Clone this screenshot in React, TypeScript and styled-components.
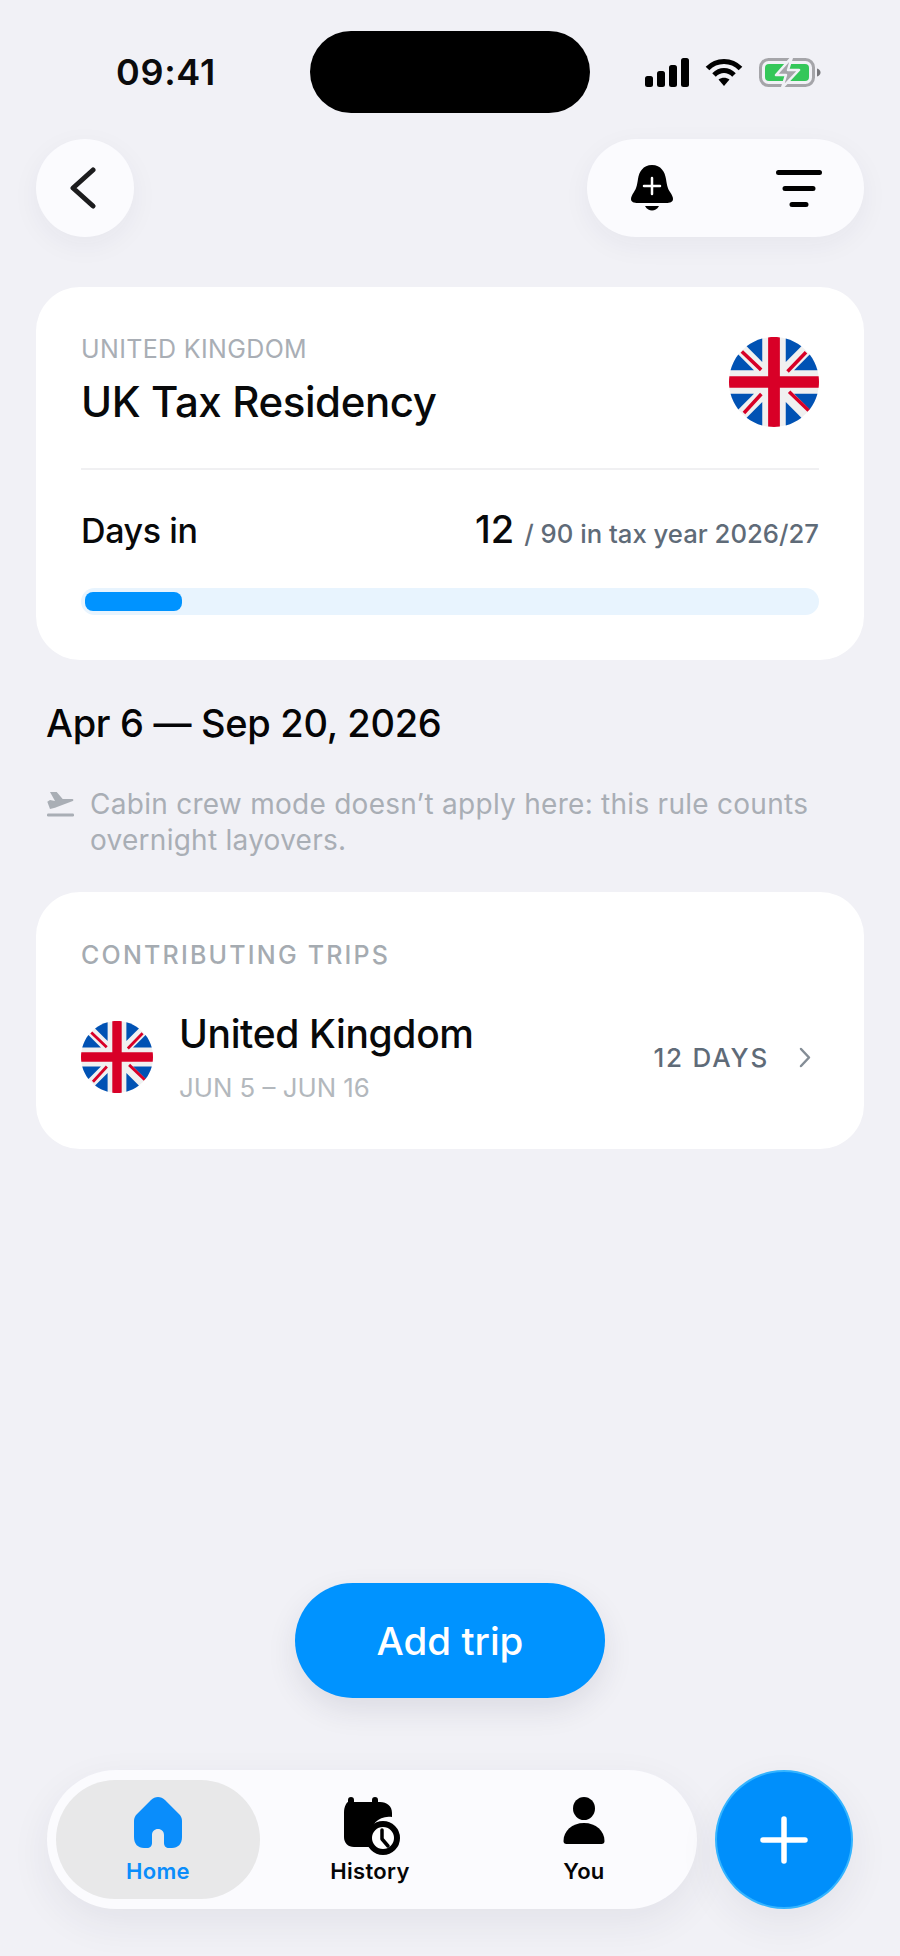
import React from "react";
import styled, { createGlobalStyle } from "styled-components";

const Global = createGlobalStyle`
  html, body { margin: 0; padding: 0; background: #f1f1f6; }
  * { box-sizing: border-box; }
  body { font-family: "Inter", "Noto Sans", sans-serif; }
`;

const Page = styled.div`
  width: 900px;
  height: 1956px;
  display: flex;
  flex-direction: column;
  background: #f1f1f6;
  overflow: hidden;
`;
const StatusBar = styled.div`
  display: grid;
  grid-template-columns: 310px 280px 310px;
  align-items: center;
  height: 82px;
  margin-top: 31px;
`;
const Clock = styled.div`
  padding-left: 116px;
  font-size: 36px;
  font-weight: 600;
  letter-spacing: 0.7px;
  color: #0b0b0c;
`;
const Island = styled.div`
  height: 82px;
  background: #000;
  border-radius: 41px;
`;
const StatusIcons = styled.div`
  display: flex;
  align-items: center;
  padding-left: 55px;
  gap: 16px;
`;
const TopBar = styled.div`
  display: flex;
  justify-content: space-between;
  margin: 26px 36px 0;
`;
const RoundButton = styled.div`
  width: 98px;
  height: 98px;
  border-radius: 50%;
  background: #fbfbfe;
  display: flex;
  align-items: center;
  justify-content: center;
  padding-right: 4px;
  box-shadow: 0 8px 28px rgba(40, 40, 70, 0.05);
`;
const PillButton = styled.div`
  width: 277px;
  height: 98px;
  border-radius: 49px;
  background: #fbfbfe;
  display: flex;
  align-items: center;
  justify-content: space-between;
  padding: 0 42px 0 43px;
  box-shadow: 0 8px 28px rgba(40, 40, 70, 0.05);
`;
const Card = styled.section`
  margin: 0 36px;
  background: #fff;
  border-radius: 44px;
  padding: 0 45px;
`;
const SummaryCard = styled(Card)`
  margin-top: 50px;
  height: 373px;
  padding-top: 50px;
`;
const SummaryHead = styled.div`
  display: flex;
  justify-content: space-between;
  height: 133px;
  border-bottom: 2px solid #f0f0f2;
`;
const Eyebrow = styled.div`
  font-size: 25px;
  line-height: 24px;
  letter-spacing: 0.35px;
  color: #a9aeb5;
`;
const Title = styled.h1`
  margin: 15px 0 0;
  font-size: 42px;
  line-height: 52px;
  font-weight: 500;
  letter-spacing: -0.4px;
  color: #08090a;
`;
const DaysRow = styled.div`
  display: flex;
  justify-content: space-between;
  align-items: baseline;
  margin-top: 36px;
`;
const DaysLabel = styled.span`
  font-size: 34px;
  line-height: 44px;
  font-weight: 500;
  letter-spacing: -0.4px;
  color: #08090a;
`;
const DaysValue = styled.span`
  font-size: 38px;
  font-weight: 500;
  color: #08090a;
`;
const DaysOf = styled.span`
  font-size: 25.7px;
  font-weight: 500;
  color: #5f6b78;
  margin-left: 10px;
`;
const Track = styled.div`
  margin-top: 35px;
  height: 27px;
  border-radius: 14px;
  background: #e8f4fe;
  padding: 4px;
`;
const Fill = styled.div`
  height: 19px;
  border-radius: 8px;
  background: #0093ff;
`;
const DateHeading = styled.h2`
  margin: 39px 0 0 46px;
  font-size: 38px;
  line-height: 48px;
  font-weight: 500;
  letter-spacing: -0.3px;
  color: #050506;
`;
const Note = styled.div`
  display: flex;
  gap: 16px;
  margin: 39px 46px 0 46px;
`;
const NoteIcon = styled.div`
  flex: none;
  width: 28px;
  padding-top: 6px;
`;
const NoteText = styled.p`
  margin: 0;
  font-size: 28px;
  line-height: 36px;
  letter-spacing: 0.27px;
  color: #a9aeb5;
`;
const TripsCard = styled(Card)`
  margin-top: 34px;
  height: 257px;
  padding-top: 48px;
`;
const SectionLabel = styled.div`
  font-size: 25px;
  line-height: 30px;
  font-weight: 500;
  letter-spacing: 2.2px;
  color: #a5abb1;
`;
const TripRow = styled.div`
  display: flex;
  align-items: center;
  margin-top: 40px;
`;
const TripText = styled.div`
  margin-left: 26px;
  flex: 1;
`;
const TripName = styled.div`
  font-size: 39px;
  line-height: 48px;
  font-weight: 500;
  letter-spacing: -0.35px;
  color: #08090a;
`;
const TripDates = styled.div`
  margin-top: 14px;
  font-size: 25.8px;
  line-height: 32px;
  color: #b3b8bd;
`;
const TripDays = styled.div`
  font-size: 26px;
  font-weight: 500;
  letter-spacing: 1.8px;
  color: #5f6b78;
  margin-right: 30px;
`;
const ChevronSlot = styled.div`
  display: flex;
  margin-right: 8px;
`;
const Spacer = styled.div`
  flex: 1;
`;
const AddTrip = styled.button`
  align-self: center;
  width: 310px;
  height: 115px;
  border: 0;
  border-radius: 58px;
  background: #0093ff;
  color: #fff;
  font-family: inherit;
  font-size: 38.5px;
  font-weight: 500;
  box-shadow: 0 12px 30px rgba(40, 40, 70, 0.1);
`;
const BottomRow = styled.div`
  display: flex;
  gap: 18px;
  margin: 72px 47px 47px 47px;
`;
const Nav = styled.nav`
  width: 650px;
  height: 139px;
  border-radius: 70px;
  background: #fbfbfe;
  padding: 10px 9px;
  display: grid;
  grid-template-columns: 204px 220px 208px;
  box-shadow: 0 14px 40px rgba(40, 40, 70, 0.07);
`;
const NavItem = styled.div<{ $active?: boolean }>`
  height: 119px;
  border-radius: 60px;
  background: ${(p) => (p.$active ? "#e8e8e9" : "transparent")};
  color: ${(p) => (p.$active ? "#0a8dfb" : "#050506")};
  display: flex;
  flex-direction: column;
  align-items: center;
  font-size: 22px;
  font-weight: 600;
  letter-spacing: 0.3px;
  line-height: 28px;
`;
const NavIcon = styled.div`
  height: 77px;
  padding-top: 17px;
  display: flex;
  justify-content: center;
`;
const Fab = styled.div`
  width: 138px;
  height: 139px;
  border-radius: 50%;
  background: #008ffb;
  border: 2px solid #33b4ff;
  display: flex;
  align-items: center;
  justify-content: center;
  box-shadow: 0 14px 40px rgba(40, 40, 70, 0.07);
`;

const Flag = ({ size }: { size: number }) => (
  <svg width={size} height={size} viewBox="0 0 512 512" style={{ flex: "none" }}>
    <circle cx="256" cy="256" r="256" fill="#f0f0f0" />
    <g fill="#0052b4">
      <path d="M52.92 100.142c-20.109 26.163-35.272 56.318-44.101 89.077h133.178L52.92 100.142z" />
      <path d="M503.181 189.219c-8.829-32.758-23.993-62.913-44.101-89.076l-89.075 89.076h133.176z" />
      <path d="M8.819 322.784c8.83 32.758 23.993 62.913 44.101 89.075l89.074-89.075H8.819z" />
      <path d="M411.858 52.921c-26.163-20.109-56.317-35.272-89.076-44.102v133.177l89.076-89.075z" />
      <path d="M100.142 459.079c26.163 20.109 56.318 35.272 89.076 44.102V370.005l-89.076 89.074z" />
      <path d="M189.217 8.819c-32.758 8.83-62.913 23.993-89.075 44.101l89.075 89.075V8.819z" />
      <path d="M322.783 503.181c32.758-8.83 62.913-23.993 89.075-44.101l-89.075-89.075v133.176z" />
      <path d="M370.005 322.784l89.075 89.076c20.108-26.162 35.272-56.318 44.101-89.076H370.005z" />
    </g>
    <path
      fill="#d80027"
      d="M509.833 222.609H289.392V2.167C278.461.744 267.317 0 256 0c-11.319 0-22.461.744-33.391 2.167v220.441H2.167C.744 233.539 0 244.683 0 256c0 11.319.744 22.461 2.167 33.391h220.441v220.442C233.539 511.256 244.681 512 256 512c11.317 0 22.461-.744 33.391-2.167V289.392h220.442C511.256 278.461 512 267.317 512 256c0-11.317-.744-22.461-2.167-33.391z"
    />
    <path
      d="M73 82L183 187M438 87L333 196M85 432L184 324M453 418L342 312"
      stroke="#d80027"
      strokeWidth="20"
      fill="none"
    />
  </svg>
);

const Signal = () => (
  <svg width="44" height="29" viewBox="0 0 44 29" fill="#000">
    <rect x="0" y="18" width="8" height="11" rx="2.5" />
    <rect x="12" y="13" width="8" height="16" rx="2.5" />
    <rect x="24" y="7" width="8" height="22" rx="2.5" />
    <rect x="36" y="0" width="8" height="29" rx="2.5" />
  </svg>
);
const Wifi = () => (
  <svg width="38" height="29" viewBox="0 0 38 29" fill="none" stroke="#000" strokeWidth="5">
    <path d="M2.5 10.5C11.5 1 26.5 1 35.5 10.5" />
    <path d="M9 17C15 11 23 11 29 17" />
    <path d="M13.5 21.5L19 28L24.5 21.5C21 19 17 19 13.5 21.5Z" fill="#000" stroke="none" />
  </svg>
);
const Battery = () => (
  <svg width="62" height="29" viewBox="0 0 62 29">
    <rect x="1.5" y="1.5" width="53" height="26" rx="8" fill="none" stroke="#a5a5a9" strokeWidth="3" />
    <rect x="6" y="6" width="44" height="17" rx="4" fill="#34c759" />
    <path d="M58 10.5c2 .6 3.5 2 3.5 4s-1.500 3.400-3.500 4z" fill="#77777b" />
    <path d="M33 -1L17 17H27L23 30L40 12H29Z" fill="#a5a5a9" stroke="#f1f1f6" strokeWidth="2.500" strokeLinejoin="round" />
  </svg>
);
const Chevron = () => (
  <svg width="26" height="42" viewBox="0 0 26 42" fill="none" stroke="#1c1c1e" strokeWidth="5" strokeLinecap="round" strokeLinejoin="round">
    <path d="M23 3L3 21L23 39" />
  </svg>
);
const BellPlus = () => (
  <svg width="44" height="46" viewBox="0 0 44 46">
    <path
      d="M22 0C31 0 35 7 36 14C37 21 38 24 40 27C42 30 43 32 43 34C43 37 40 38 36 38H8C4 38 1 37 1 34C1 32 2 30 4 27C6 24 7 21 8 14C9 7 13 0 22 0Z"
      fill="#000"
    />
    <path d="M15 41H29C27 44.500 24.500 45.500 22 45.500C19.500 45.500 17 44.500 15 41Z" fill="#000" />
    <path d="M22 13V29M14 21H30" stroke="#fff" strokeWidth="2.500" strokeLinecap="round" />
  </svg>
);
const FilterLines = () => (
  <svg width="46" height="37" viewBox="0 0 46 37" stroke="#000" strokeWidth="5" strokeLinecap="round">
    <path d="M2.500 2.500H43.500M9 18.500H37M16 34.500H30" />
  </svg>
);
const SmallChevron = () => (
  <svg width="12" height="21" viewBox="0 0 12 21" fill="none" stroke="#848d96" strokeWidth="2.500" strokeLinecap="round" strokeLinejoin="round">
    <path d="M2 2L10 10.500L2 19" />
  </svg>
);
const Landing = () => (
  <svg width="28" height="26" viewBox="0 0 28 26" fill="#a9aeb5">
    <path d="M4 0H10.700L16.700 7H26.300C27.500 7 27.800 8.500 26.800 9L9 15.700L4 17L1.300 9.700L4 8L9 9Z" />
    <rect x="1" y="21.500" width="27" height="3" rx="1.200" />
  </svg>
);
const Home = () => (
  <svg width="48" height="51" viewBox="0 0 48 51" fill="#0a8dfb">
    <path d="M17 3C21 -1 27 -1 31 3L45 17C47 19 48 21 48 24V40C48 47 44 51 38 51H35C32 51 30 49 30 46V38C30 34.500 27.500 32 24 32C20.500 32 18 34.500 18 38V46C18 49 16 51 13 51H10C4 51 0 47 0 40V24C0 21 1 19 3 17Z" />
  </svg>
);
const History = () => (
  <svg width="56" height="58" viewBox="0 0 56 58" style={{ marginLeft: 3 }}>
    <path d="M7 0C9 0 10 1.200 10 3V5H28V3C28 1.200 29 0 31 0C33 0 34 1.200 34 3V5H36C43 5 48 9 48 16V20C36 18 26 27 26 39C26 43 27 47 29 50H10C4 50 0 46 0 40V16C0 9 3 5 4 5V3C4 1.200 5 0 7 0Z" fill="#000" />
    <circle cx="39" cy="41" r="14" fill="#fff" stroke="#000" strokeWidth="6" />
    <path d="M38 33V42L44 49" stroke="#000" strokeWidth="3.500" fill="none" strokeLinecap="round" strokeLinejoin="round" />
  </svg>
);
const Person = () => (
  <svg width="42" height="48" viewBox="0 0 42 48" fill="#000">
    <ellipse cx="21" cy="11.500" rx="11" ry="11.500" />
    <path d="M21 26C9 26 0.500 34 0.500 44C0.500 46 1.500 47 3.500 47H38.500C40.500 47 41.500 46 41.500 44C41.500 34 33 26 21 26Z" />
  </svg>
);
const Plus = () => (
  <svg width="48" height="48" viewBox="0 0 48 48" stroke="#fff" strokeWidth="5.500" strokeLinecap="round">
    <path d="M24 3V45M3 24H45" />
  </svg>
);

export default function App() {
  return (
    <Page>
      <Global />
      <StatusBar>
        <Clock>09:41</Clock>
        <Island />
        <StatusIcons>
          <Signal />
          <Wifi />
          <Battery />
        </StatusIcons>
      </StatusBar>
      <TopBar>
        <RoundButton>
          <Chevron />
        </RoundButton>
        <PillButton>
          <BellPlus />
          <FilterLines />
        </PillButton>
      </TopBar>
      <SummaryCard>
        <SummaryHead>
          <div>
            <Eyebrow>UNITED KINGDOM</Eyebrow>
            <Title>UK Tax Residency</Title>
          </div>
          <Flag size={90} />
        </SummaryHead>
        <DaysRow>
          <DaysLabel>Days in</DaysLabel>
          <span>
            <DaysValue>12</DaysValue>
            <DaysOf>/ 90 in tax year 2026/27</DaysOf>
          </span>
        </DaysRow>
        <Track>
          <Fill style={{ width: `${(12 / 90) * 100}%` }} />
        </Track>
      </SummaryCard>
      <DateHeading>Apr 6 — Sep 20, 2026</DateHeading>
      <Note>
        <NoteIcon>
          <Landing />
        </NoteIcon>
        <NoteText>Cabin crew mode doesn’t apply here: this rule counts overnight layovers.</NoteText>
      </Note>
      <TripsCard>
        <SectionLabel>CONTRIBUTING TRIPS</SectionLabel>
        <TripRow>
          <Flag size={72} />
          <TripText>
            <TripName>United Kingdom</TripName>
            <TripDates>JUN 5 – JUN 16</TripDates>
          </TripText>
          <TripDays>12 DAYS</TripDays>
          <ChevronSlot>
            <SmallChevron />
          </ChevronSlot>
        </TripRow>
      </TripsCard>
      <Spacer />
      <AddTrip>Add trip</AddTrip>
      <BottomRow>
        <Nav>
          <NavItem $active>
            <NavIcon>
              <Home />
            </NavIcon>
            Home
          </NavItem>
          <NavItem>
            <NavIcon>
              <History />
            </NavIcon>
            History
          </NavItem>
          <NavItem>
            <NavIcon>
              <Person />
            </NavIcon>
            You
          </NavItem>
        </Nav>
        <Fab>
          <Plus />
        </Fab>
      </BottomRow>
    </Page>
  );
}
